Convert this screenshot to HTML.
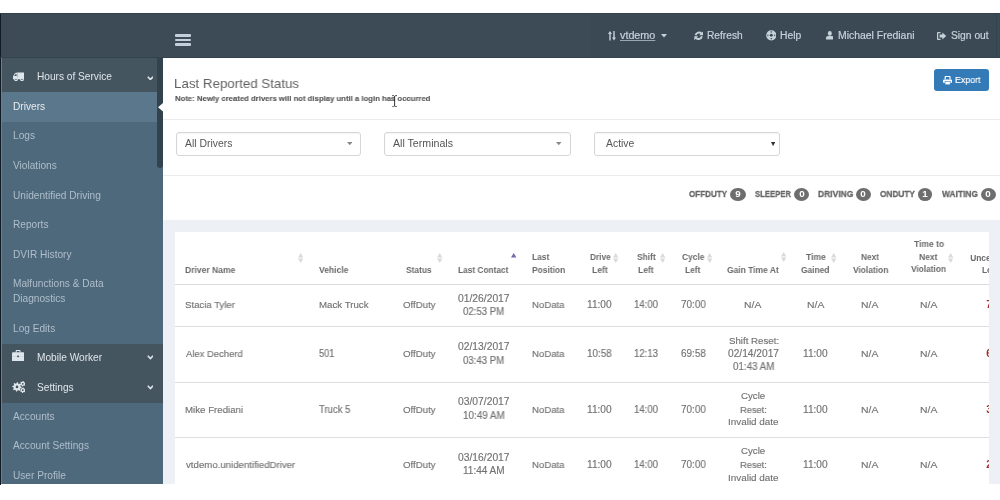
<!DOCTYPE html>
<html><head><meta charset="utf-8"><style>
html,body{margin:0;padding:0;background:#fff;width:1000px;height:500px;overflow:hidden;position:relative}
body div{position:absolute}
.t{font-family:"Liberation Sans", sans-serif;white-space:nowrap;will-change:transform}
svg{display:block}
</style></head><body>
<div style="left:0px;top:13px;width:1000px;height:45px;background:#3c4b56;"></div>
<div style="left:0px;top:13px;width:1.2px;height:471.5px;background:#101b23;"></div>
<div style="left:1.2px;top:58px;width:1px;height:426.4px;background:#6a7e8c;"></div>
<div style="left:590px;top:13px;width:410px;height:45px;background:#3a4953;"></div>
<div style="left:996px;top:13px;width:1px;height:45px;background:#35434d;"></div>
<div style="left:0px;top:13px;width:1000px;height:1px;background:#33414b;"></div>
<div style="left:0px;top:57px;width:1000px;height:1px;background:#34424c;"></div>
<div style="left:174.6px;top:34.3px;width:16.5px;height:2.6px;background:#c3d0da;border-radius:1px"></div>
<div style="left:174.6px;top:38.7px;width:16.5px;height:2.6px;background:#c3d0da;border-radius:1px"></div>
<div style="left:174.6px;top:43.0px;width:16.5px;height:2.6px;background:#c3d0da;border-radius:1px"></div>
<svg style="position:absolute;left:607.5px;top:31px" width="8" height="9.5" viewBox="0 0 8 9.5"><path d="M2 0 L0 3 L1.3 3 L1.3 9.5 L2.7 9.5 L2.7 3 L4 3 Z" fill="#c6d2da"/><path d="M6 9.5 L4 6.5 L5.3 6.5 L5.3 0 L6.7 0 L6.7 6.5 L8 6.5 Z" fill="#c6d2da"/></svg>
<div class="t" style="left:620.00px;top:30.70px;font-size:10.0px;line-height:10.0px;color:#c6d2da;font-weight:400;transform:scaleX(1.0769);transform-origin:0 0;text-decoration:underline;text-decoration-color:rgba(198,210,218,.7);-webkit-text-stroke:0.2px #c6d2da">vtdemo</div>
<svg style="position:absolute;left:661.4px;top:34px" width="6" height="3.5" viewBox="0 0 6 3.5"><path d="M0 0 L6 0 L3 3.5 Z" fill="#c6d2da"/></svg>
<svg style="position:absolute;left:693.8px;top:30.9px" width="9.5" height="9.5" viewBox="0 0 9.5 9.5"><g fill="none" stroke="#c6d2da" stroke-width="1.9"><path d="M1.6 4.2 A3.5 3.5 0 0 1 7.6 2.6"/><path d="M7.9 5.3 A3.5 3.5 0 0 1 1.9 6.9"/></g><path d="M9.2 0.3 L9.2 4.3 L5.2 4.3 Z" fill="#c6d2da"/><path d="M0.3 9.2 L0.3 5.2 L4.3 5.2 Z" fill="#c6d2da"/></svg>
<div class="t" style="left:707.29px;top:30.70px;font-size:10.0px;line-height:10.0px;color:#c6d2da;font-weight:400;transform:scaleX(1.0176);transform-origin:0 0;-webkit-text-stroke:0.2px #c6d2da">Refresh</div>
<svg style="position:absolute;left:765.8px;top:30.3px" width="10.6" height="10.6" viewBox="0 0 10.6 10.6"><circle cx="5.3" cy="5.3" r="5.1" fill="#c6d2da"/><circle cx="5.3" cy="5.3" r="1.5" fill="#3c4b56"/><g fill="#3c4b56"><ellipse cx="5.3" cy="1.9" rx="0.9" ry="0.6"/><ellipse cx="5.3" cy="8.7" rx="0.9" ry="0.6"/><ellipse cx="1.9" cy="5.3" rx="0.6" ry="0.9"/><ellipse cx="8.7" cy="5.3" rx="0.6" ry="0.9"/></g></svg>
<div class="t" style="left:779.88px;top:30.70px;font-size:10.0px;line-height:10.0px;color:#c6d2da;font-weight:400;transform:scaleX(1.0329);transform-origin:0 0;-webkit-text-stroke:0.2px #c6d2da">Help</div>
<svg style="position:absolute;left:825.8px;top:31.2px" width="7.6" height="8.6" viewBox="0 0 7.6 8.6"><ellipse cx="3.8" cy="2.4" rx="2" ry="2.3" fill="#c6d2da"/><path d="M0 8.6 L0 6.6 Q0 4.9 2.2 4.9 L5.4 4.9 Q7.6 4.9 7.6 6.6 L7.6 8.6 Z" fill="#c6d2da"/></svg>
<div class="t" style="left:837.88px;top:30.70px;font-size:10.0px;line-height:10.0px;color:#c6d2da;font-weight:400;transform:scaleX(1.0428);transform-origin:0 0;-webkit-text-stroke:0.2px #c6d2da">Michael Frediani</div>
<svg style="position:absolute;left:937px;top:32px" width="9.5" height="8" viewBox="0 0 9.5 8"><path d="M3.5 0.6 L1 0.6 Q0.6 0.6 0.6 1 L0.6 7 Q0.6 7.4 1 7.4 L3.5 7.4" fill="none" stroke="#c6d2da" stroke-width="1.2"/><path d="M2.6 2.6 L5.4 2.6 L5.4 0.4 L9.2 4 L5.4 7.6 L5.4 5.4 L2.6 5.4 Z" fill="#c6d2da"/></svg>
<div class="t" style="left:950.89px;top:30.70px;font-size:10.0px;line-height:10.0px;color:#c6d2da;font-weight:400;transform:scaleX(1.0262);transform-origin:0 0;-webkit-text-stroke:0.2px #c6d2da">Sign out</div>
<div style="left:2.2px;top:58px;width:160.8px;height:426.4px;background:#4f697c;"></div>
<div style="left:2.2px;top:58px;width:160.8px;height:33.5px;background:#45555f;"></div>
<div style="left:2.2px;top:91.5px;width:160.8px;height:30px;background:#5b778b;"></div>
<div style="left:2.2px;top:344px;width:160.8px;height:58.5px;background:#45555f;"></div>
<div style="left:157px;top:58px;width:6px;height:110.4px;background:#33434e;border-radius:0 0 3px 3px"></div>
<svg style="position:absolute;left:158px;top:103px" width="5" height="8.5" viewBox="0 0 5 8.5"><path d="M5 0 L0 4.25 L5 8.5 Z" fill="#ffffff"/></svg>
<div class="t" style="left:37.00px;top:72.17px;width:200px;font-size:10.15px;line-height:10.15px;color:#dfe6eb;font-weight:400;text-align:left;">Hours of Service</div>
<div class="t" style="left:13.00px;top:101.92px;width:200px;font-size:10.15px;line-height:10.15px;color:#e6edf1;font-weight:400;text-align:left;">Drivers</div>
<div class="t" style="left:13.00px;top:131.43px;width:200px;font-size:10.15px;line-height:10.15px;color:#aebecb;font-weight:400;text-align:left;">Logs</div>
<div class="t" style="left:13.00px;top:160.93px;width:200px;font-size:10.15px;line-height:10.15px;color:#aebecb;font-weight:400;text-align:left;">Violations</div>
<div class="t" style="left:13.00px;top:190.68px;width:200px;font-size:10.15px;line-height:10.15px;color:#aebecb;font-weight:400;text-align:left;">Unidentified Driving</div>
<div class="t" style="left:13.00px;top:220.18px;width:200px;font-size:10.15px;line-height:10.15px;color:#aebecb;font-weight:400;text-align:left;">Reports</div>
<div class="t" style="left:13.00px;top:250.18px;width:200px;font-size:10.15px;line-height:10.15px;color:#aebecb;font-weight:400;text-align:left;">DVIR History</div>
<div class="t" style="left:13.00px;top:279.43px;width:200px;font-size:10.15px;line-height:10.15px;color:#aebecb;font-weight:400;text-align:left;">Malfunctions &amp; Data</div>
<div class="t" style="left:13.00px;top:293.93px;width:200px;font-size:10.15px;line-height:10.15px;color:#aebecb;font-weight:400;text-align:left;">Diagnostics</div>
<div class="t" style="left:13.00px;top:323.93px;width:200px;font-size:10.15px;line-height:10.15px;color:#aebecb;font-weight:400;text-align:left;">Log Edits</div>
<div class="t" style="left:37.00px;top:353.18px;width:200px;font-size:10.15px;line-height:10.15px;color:#dfe6eb;font-weight:400;text-align:left;">Mobile Worker</div>
<div class="t" style="left:37.00px;top:382.68px;width:200px;font-size:10.15px;line-height:10.15px;color:#dfe6eb;font-weight:400;text-align:left;">Settings</div>
<div class="t" style="left:13.00px;top:411.93px;width:200px;font-size:10.15px;line-height:10.15px;color:#aebecb;font-weight:400;text-align:left;">Accounts</div>
<div class="t" style="left:13.00px;top:441.43px;width:200px;font-size:10.15px;line-height:10.15px;color:#aebecb;font-weight:400;text-align:left;">Account Settings</div>
<div class="t" style="left:13.00px;top:470.82px;width:200px;font-size:10.15px;line-height:10.15px;color:#aebecb;font-weight:400;text-align:left;">User Profile</div>
<svg style="position:absolute;left:146.6px;top:75.6px" width="6.8" height="4.6" viewBox="0 0 6.8 4.6"><path d="M0.8 0.8 L3.4 3.5 L6 0.8" fill="none" stroke="#dfe6eb" stroke-width="1.6"/></svg>
<svg style="position:absolute;left:146.6px;top:355.3px" width="6.8" height="4.6" viewBox="0 0 6.8 4.6"><path d="M0.8 0.8 L3.4 3.5 L6 0.8" fill="none" stroke="#dfe6eb" stroke-width="1.6"/></svg>
<svg style="position:absolute;left:146.6px;top:385.1px" width="6.8" height="4.6" viewBox="0 0 6.8 4.6"><path d="M0.8 0.8 L3.4 3.5 L6 0.8" fill="none" stroke="#dfe6eb" stroke-width="1.6"/></svg>
<svg style="position:absolute;left:12.7px;top:72px" width="11.6" height="9.2" viewBox="0 0 11.6 9.2"><path d="M4 0.5 L11.6 0.5 L11.6 7.2 L0 7.2 L0 4.2 L1.8 1.5 Q2.3 0.8 3 0.8 L4 0.8 Z" fill="#dfe6eb"/><circle cx="3" cy="7.4" r="1.8" fill="#dfe6eb"/><circle cx="9" cy="7.4" r="1.8" fill="#dfe6eb"/><circle cx="3" cy="7.4" r="0.7" fill="#45555f"/><circle cx="9" cy="7.4" r="0.7" fill="#45555f"/><path d="M1.2 3.9 L2.3 2.2 L3.6 2.2 L3.6 3.9 Z" fill="#45555f"/><rect x="4.3" y="1" width="0.5" height="4.6" fill="#8a969d"/></svg>
<svg style="position:absolute;left:12.2px;top:350.2px" width="12.2" height="11.2" viewBox="0 0 12.2 11.2"><path d="M4.2 2.6 L4.2 1.1 Q4.2 0.4 4.9 0.4 L7.3 0.4 Q8 0.4 8 1.1 L8 2.6" fill="none" stroke="#dfe6eb" stroke-width="1.1"/><rect x="0" y="2.3" width="12.2" height="8.9" rx="1" fill="#dfe6eb"/><rect x="0" y="6" width="12.2" height="0.5" fill="#c5ced4"/><rect x="5.2" y="5.6" width="1.8" height="1.6" fill="#45555f"/></svg>
<svg style="position:absolute;left:11.5px;top:380.8px" width="13.6" height="11.8" viewBox="0 0 13.6 11.8"><path d="M5.00 1.20 L5.92 1.29 L6.34 2.67 L6.94 2.99 L8.32 2.58 L8.91 3.29 L8.23 4.56 L8.43 5.22 L9.70 5.90 L9.61 6.82 L8.23 7.24 L7.91 7.84 L8.32 9.22 L7.61 9.81 L6.34 9.13 L5.68 9.33 L5.00 10.60 L4.08 10.51 L3.66 9.13 L3.06 8.81 L1.68 9.22 L1.09 8.51 L1.77 7.24 L1.57 6.58 L0.30 5.90 L0.39 4.98 L1.77 4.56 L2.09 3.96 L1.68 2.58 L2.39 1.99 L3.66 2.67 L4.32 2.47 Z" fill="#dfe6eb"/><circle cx="5" cy="5.9" r="1.3" fill="#45555f"/><path d="M10.80 0.00 L11.52 0.10 L11.85 0.98 L12.28 1.32 L13.22 1.40 L13.50 2.08 L12.90 2.80 L12.83 3.34 L13.22 4.20 L12.78 4.78 L11.85 4.62 L11.34 4.83 L10.80 5.60 L10.08 5.50 L9.75 4.62 L9.32 4.28 L8.38 4.20 L8.10 3.52 L8.70 2.80 L8.77 2.26 L8.38 1.40 L8.82 0.82 L9.75 0.98 L10.26 0.77 Z" fill="#dfe6eb"/><circle cx="10.8" cy="2.8" r="0.9" fill="#45555f"/><path d="M10.80 6.40 L11.52 6.50 L11.85 7.38 L12.28 7.72 L13.22 7.80 L13.50 8.48 L12.90 9.20 L12.83 9.74 L13.22 10.60 L12.78 11.18 L11.85 11.02 L11.34 11.23 L10.80 12.00 L10.08 11.90 L9.75 11.02 L9.32 10.68 L8.38 10.60 L8.10 9.92 L8.70 9.20 L8.77 8.66 L8.38 7.80 L8.82 7.22 L9.75 7.38 L10.26 7.17 Z" fill="#dfe6eb"/><circle cx="10.8" cy="9.2" r="0.9" fill="#45555f"/></svg>
<div class="t" style="left:174.41px;top:76.60px;font-size:13.4px;line-height:13.4px;color:#626262;font-weight:400;transform:scaleX(0.9944);transform-origin:0 0;">Last Reported Status</div>
<div class="t" style="left:175.16px;top:95.20px;font-size:8.0px;line-height:8.0px;color:#555;font-weight:700;transform:scaleX(0.9659);transform-origin:0 0;-webkit-text-stroke:0.12px #555">Note: Newly created drivers will not display until a login has occurred</div>
<div style="left:933.5px;top:69.3px;width:55.3px;height:21.7px;background:#337ab7;border-radius:3px"></div>
<svg style="position:absolute;left:942.8px;top:76px" width="9.2" height="9" viewBox="0 0 9.2 9"><path d="M2.2 3.2 L2.2 1.2 Q2.2 0.4 3 0.4 L6.2 0.4 Q7 0.4 7 1.2 L7 3.2" fill="none" stroke="#fff" stroke-width="1.2"/><rect x="0" y="3.4" width="9.2" height="3.6" rx="1.2" fill="#fff"/><rect x="2" y="5.6" width="5.2" height="3.2" fill="#fff" stroke="#337ab7" stroke-width="0.6"/></svg>
<div class="t" style="left:955.01px;top:76.00px;font-size:9.0px;line-height:9.0px;color:#ffffff;font-weight:400;transform:scaleX(0.9804);transform-origin:0 0;-webkit-text-stroke:0.2px #fff">Export</div>
<div style="left:163px;top:119px;width:837px;height:1px;background:#ececec;"></div>
<div style="left:163px;top:175px;width:837px;height:1px;background:#ececec;"></div>
<div style="left:175.5px;top:131.5px;width:185.2px;height:24.5px;background:#fff;box-sizing:border-box;border:1px solid #d6d6d6;border-radius:3px;box-shadow:inset 0 1px 1px rgba(0,0,0,.04)"></div>
<div style="left:384px;top:131.5px;width:186.5px;height:24.5px;background:#fff;box-sizing:border-box;border:1px solid #d6d6d6;border-radius:3px;box-shadow:inset 0 1px 1px rgba(0,0,0,.04)"></div>
<div style="left:594px;top:131.5px;width:185.70000000000005px;height:24.5px;background:#fff;box-sizing:border-box;border:1px solid #d6d6d6;border-radius:3px;box-shadow:inset 0 1px 1px rgba(0,0,0,.04)"></div>
<div class="t" style="left:184.50px;top:138.90px;font-size:10.4px;line-height:10.4px;color:#555;font-weight:400;transform:scaleX(1.0000);transform-origin:0 0;">All Drivers</div>
<div class="t" style="left:393.00px;top:138.90px;font-size:10.4px;line-height:10.4px;color:#555;font-weight:400;transform:scaleX(1.0222);transform-origin:0 0;">All Terminals</div>
<div class="t" style="left:605.80px;top:139.00px;font-size:10.4px;line-height:10.4px;color:#555;font-weight:400;transform:scaleX(0.9964);transform-origin:0 0;">Active</div>
<svg style="position:absolute;left:346.8px;top:142.2px" width="5.6" height="3.2" viewBox="0 0 5.6 3.2"><path d="M0 0 L5.6 0 L2.8 3.2 Z" fill="#888"/></svg>
<svg style="position:absolute;left:556.4px;top:142.2px" width="5.6" height="3.2" viewBox="0 0 5.6 3.2"><path d="M0 0 L5.6 0 L2.8 3.2 Z" fill="#888"/></svg>
<svg style="position:absolute;left:770.5px;top:141.5px" width="4.2" height="4.2" viewBox="0 0 4.2 4.2"><path d="M0 0 L4.2 0 L2.1 4.2 Z" fill="#333"/></svg>
<div class="t" style="left:689.38px;top:189.70px;font-size:9.0px;line-height:9.0px;color:#666;font-weight:700;transform:scaleX(0.8952);transform-origin:0 0;-webkit-text-stroke:0.3px #666">OFFDUTY</div>
<div style="left:730.4px;top:187.6px;width:15.200000000000045px;height:13.2px;background:#6e6e6e;border-radius:50%"></div>
<div class="t" style="left:728.00px;top:189.30px;width:20px;font-size:9.8px;line-height:9.8px;color:#fff;font-weight:700;text-align:center;">9</div>
<div class="t" style="left:754.99px;top:189.70px;font-size:9.0px;line-height:9.0px;color:#666;font-weight:700;transform:scaleX(0.8554);transform-origin:0 0;-webkit-text-stroke:0.3px #666">SLEEPER</div>
<div style="left:793.9px;top:187.6px;width:15.399999999999977px;height:13.2px;background:#6e6e6e;border-radius:50%"></div>
<div class="t" style="left:791.60px;top:189.30px;width:20px;font-size:9.8px;line-height:9.8px;color:#fff;font-weight:700;text-align:center;">0</div>
<div class="t" style="left:817.93px;top:189.70px;font-size:9.0px;line-height:9.0px;color:#666;font-weight:700;transform:scaleX(0.9425);transform-origin:0 0;-webkit-text-stroke:0.3px #666">DRIVING</div>
<div style="left:856px;top:187.6px;width:14.899999999999977px;height:13.2px;background:#6e6e6e;border-radius:50%"></div>
<div class="t" style="left:853.45px;top:189.30px;width:20px;font-size:9.8px;line-height:9.8px;color:#fff;font-weight:700;text-align:center;">0</div>
<div class="t" style="left:879.77px;top:189.70px;font-size:9.0px;line-height:9.0px;color:#666;font-weight:700;transform:scaleX(0.9173);transform-origin:0 0;-webkit-text-stroke:0.3px #666">ONDUTY</div>
<div style="left:917.9px;top:187.6px;width:14.600000000000023px;height:13.2px;background:#6e6e6e;border-radius:50%"></div>
<div class="t" style="left:915.20px;top:189.30px;width:20px;font-size:9.8px;line-height:9.8px;color:#fff;font-weight:700;text-align:center;">1</div>
<div class="t" style="left:942.40px;top:189.70px;font-size:9.0px;line-height:9.0px;color:#666;font-weight:700;transform:scaleX(0.9342);transform-origin:0 0;-webkit-text-stroke:0.3px #666">WAITING</div>
<div style="left:980.8px;top:187.6px;width:15.200000000000045px;height:13.2px;background:#6e6e6e;border-radius:50%"></div>
<div class="t" style="left:978.40px;top:189.30px;width:20px;font-size:9.8px;line-height:9.8px;color:#fff;font-weight:700;text-align:center;">0</div>
<div style="left:163px;top:220px;width:837px;height:264.4px;background:#edf0f5;"></div>
<div style="left:175px;top:232px;width:814px;height:252.4px;background:#ffffff;"></div>
<div style="left:175px;top:283.6px;width:814px;height:1.4px;background:#dcdcdc;"></div>
<div style="left:175px;top:326px;width:814px;height:1px;background:#dedede;"></div>
<div style="left:175px;top:381.8px;width:814px;height:1px;background:#dedede;"></div>
<div style="left:175px;top:437px;width:814px;height:1px;background:#dedede;"></div>
<div class="t" style="left:185.33px;top:265.70px;font-size:9.0px;line-height:9.0px;color:#6a6a6a;font-weight:700;transform:scaleX(0.9493);transform-origin:0 0;">Driver Name</div>
<svg style="position:absolute;left:297.7px;top:252.8px" width="5.4" height="10" viewBox="0 0 5.4 10"><path d="M2.7 0 L5.4 4.6 L0 4.6 Z" fill="#dadada"/><path d="M2.7 10 L5.4 5.4 L0 5.4 Z" fill="#dadada"/></svg>
<div class="t" style="left:318.90px;top:265.70px;font-size:9.0px;line-height:9.0px;color:#6a6a6a;font-weight:700;transform:scaleX(0.9463);transform-origin:0 0;">Vehicle</div>
<div class="t" style="left:406.17px;top:265.70px;font-size:9.0px;line-height:9.0px;color:#6a6a6a;font-weight:700;transform:scaleX(0.9296);transform-origin:0 0;">Status</div>
<svg style="position:absolute;left:437.2px;top:253px" width="5.4" height="10" viewBox="0 0 5.4 10"><path d="M2.7 0 L5.4 4.6 L0 4.6 Z" fill="#dadada"/><path d="M2.7 10 L5.4 5.4 L0 5.4 Z" fill="#dadada"/></svg>
<div class="t" style="left:458.44px;top:265.70px;font-size:9.0px;line-height:9.0px;color:#6a6a6a;font-weight:700;transform:scaleX(0.9241);transform-origin:0 0;">Last Contact</div>
<svg style="position:absolute;left:511.2px;top:253px" width="5.4" height="4.6" viewBox="0 0 5.4 4.6"><path d="M2.7 0 L5.4 4.6 L0 4.6 Z" fill="#6d6dab"/></svg>
<div class="t" style="left:531.53px;top:253.30px;font-size:9.0px;line-height:9.0px;color:#6a6a6a;font-weight:700;transform:scaleX(0.9333);transform-origin:0 0;">Last</div>
<div class="t" style="left:531.53px;top:265.70px;font-size:9.0px;line-height:9.0px;color:#6a6a6a;font-weight:700;transform:scaleX(0.9353);transform-origin:0 0;">Position</div>
<div class="t" style="left:589.54px;top:253.30px;font-size:9.0px;line-height:9.0px;color:#6a6a6a;font-weight:700;transform:scaleX(0.9195);transform-origin:0 0;">Drive</div>
<div class="t" style="left:591.52px;top:265.70px;font-size:9.0px;line-height:9.0px;color:#6a6a6a;font-weight:700;transform:scaleX(0.9562);transform-origin:0 0;">Left</div>
<svg style="position:absolute;left:613.3px;top:252.8px" width="5.4" height="10" viewBox="0 0 5.4 10"><path d="M2.7 0 L5.4 4.6 L0 4.6 Z" fill="#dadada"/><path d="M2.7 10 L5.4 5.4 L0 5.4 Z" fill="#dadada"/></svg>
<div class="t" style="left:636.97px;top:253.30px;font-size:9.0px;line-height:9.0px;color:#6a6a6a;font-weight:700;transform:scaleX(0.9316);transform-origin:0 0;">Shift</div>
<div class="t" style="left:638.32px;top:265.70px;font-size:9.0px;line-height:9.0px;color:#6a6a6a;font-weight:700;transform:scaleX(0.9500);transform-origin:0 0;">Left</div>
<svg style="position:absolute;left:659.9px;top:252.8px" width="5.4" height="10" viewBox="0 0 5.4 10"><path d="M2.7 0 L5.4 4.6 L0 4.6 Z" fill="#dadada"/><path d="M2.7 10 L5.4 5.4 L0 5.4 Z" fill="#dadada"/></svg>
<div class="t" style="left:681.77px;top:253.30px;font-size:9.0px;line-height:9.0px;color:#6a6a6a;font-weight:700;transform:scaleX(0.9319);transform-origin:0 0;">Cycle</div>
<div class="t" style="left:685.03px;top:265.70px;font-size:9.0px;line-height:9.0px;color:#6a6a6a;font-weight:700;transform:scaleX(0.9312);transform-origin:0 0;">Left</div>
<svg style="position:absolute;left:706.5px;top:252.8px" width="5.4" height="10" viewBox="0 0 5.4 10"><path d="M2.7 0 L5.4 4.6 L0 4.6 Z" fill="#dadada"/><path d="M2.7 10 L5.4 5.4 L0 5.4 Z" fill="#dadada"/></svg>
<div class="t" style="left:727.46px;top:265.70px;font-size:9.0px;line-height:9.0px;color:#6a6a6a;font-weight:700;transform:scaleX(0.9406);transform-origin:0 0;">Gain Time At</div>
<svg style="position:absolute;left:780.7px;top:252.4px" width="5.4" height="10" viewBox="0 0 5.4 10"><path d="M2.7 0 L5.4 4.6 L0 4.6 Z" fill="#dadada"/><path d="M2.7 10 L5.4 5.4 L0 5.4 Z" fill="#dadada"/></svg>
<div class="t" style="left:806.00px;top:253.30px;font-size:9.0px;line-height:9.0px;color:#6a6a6a;font-weight:700;transform:scaleX(0.9561);transform-origin:0 0;">Time</div>
<div class="t" style="left:801.37px;top:265.70px;font-size:9.0px;line-height:9.0px;color:#6a6a6a;font-weight:700;transform:scaleX(0.9311);transform-origin:0 0;">Gained</div>
<svg style="position:absolute;left:831.2px;top:252.8px" width="5.4" height="10" viewBox="0 0 5.4 10"><path d="M2.7 0 L5.4 4.6 L0 4.6 Z" fill="#dadada"/><path d="M2.7 10 L5.4 5.4 L0 5.4 Z" fill="#dadada"/></svg>
<div class="t" style="left:860.94px;top:253.30px;font-size:9.0px;line-height:9.0px;color:#6a6a6a;font-weight:700;transform:scaleX(0.9211);transform-origin:0 0;">Next</div>
<div class="t" style="left:852.50px;top:265.70px;font-size:9.0px;line-height:9.0px;color:#6a6a6a;font-weight:700;transform:scaleX(0.9360);transform-origin:0 0;">Violation</div>
<div class="t" style="left:913.90px;top:240.40px;font-size:9.0px;line-height:9.0px;color:#6a6a6a;font-weight:700;transform:scaleX(0.9492);transform-origin:0 0;">Time to</div>
<div class="t" style="left:919.03px;top:253.00px;font-size:9.0px;line-height:9.0px;color:#6a6a6a;font-weight:700;transform:scaleX(0.9474);transform-origin:0 0;">Next</div>
<div class="t" style="left:911.10px;top:265.40px;font-size:9.0px;line-height:9.0px;color:#6a6a6a;font-weight:700;transform:scaleX(0.9280);transform-origin:0 0;">Violation</div>
<svg style="position:absolute;left:948.1px;top:252.6px" width="5.4" height="10" viewBox="0 0 5.4 10"><path d="M2.7 0 L5.4 4.6 L0 4.6 Z" fill="#dadada"/><path d="M2.7 10 L5.4 5.4 L0 5.4 Z" fill="#dadada"/></svg>
<div style="left:963px;top:232px;width:26px;height:252.4px;overflow:hidden">
<div class="t" style="left:-11.50px;top:21.60px;width:80px;font-size:8.4px;line-height:8.4px;color:#6a6a6a;font-weight:700;text-align:center">Uncertified</div>
<div class="t" style="left:-11.50px;top:34.00px;width:80px;font-size:8.4px;line-height:8.4px;color:#6a6a6a;font-weight:700;text-align:center">Logs</div>
<div class="t" style="left:-14.40px;top:68.10px;width:80px;font-size:10px;line-height:10px;color:#9c2f2b;font-weight:700;text-align:center">7</div>
<div class="t" style="left:-14.40px;top:116.90px;width:80px;font-size:10px;line-height:10px;color:#9c2f2b;font-weight:700;text-align:center">6</div>
<div class="t" style="left:-14.40px;top:172.90px;width:80px;font-size:10px;line-height:10px;color:#9c2f2b;font-weight:700;text-align:center">3</div>
<div class="t" style="left:-14.40px;top:227.50px;width:80px;font-size:10px;line-height:10px;color:#9c2f2b;font-weight:700;text-align:center">2</div>
</div>
<div class="t" style="left:185.31px;top:300.25px;font-size:9.7px;line-height:9.7px;color:#727272;font-weight:400;transform:scaleX(0.9889);transform-origin:0 0;-webkit-text-stroke:0.15px #727272">Stacia Tyler</div>
<div class="t" style="left:318.50px;top:300.25px;font-size:9.7px;line-height:9.7px;color:#727272;font-weight:400;transform:scaleX(1.0000);transform-origin:0 0;-webkit-text-stroke:0.15px #727272">Mack Truck</div>
<div class="t" style="left:402.75px;top:300.25px;font-size:9.7px;line-height:9.7px;color:#727272;font-weight:400;transform:scaleX(0.9922);transform-origin:0 0;-webkit-text-stroke:0.15px #727272">OffDuty</div>
<div class="t" style="left:457.84px;top:293.90px;font-size:10.0px;line-height:10.0px;color:#727272;font-weight:400;transform:scaleX(1.0303);transform-origin:0 0;-webkit-text-stroke:0.15px #727272">01/26/2017</div>
<div class="t" style="left:463.16px;top:306.90px;font-size:10.0px;line-height:10.0px;color:#727272;font-weight:400;transform:scaleX(0.9619);transform-origin:0 0;-webkit-text-stroke:0.15px #727272">02:53 PM</div>
<div class="t" style="left:531.51px;top:300.25px;font-size:9.7px;line-height:9.7px;color:#727272;font-weight:400;transform:scaleX(0.9846);transform-origin:0 0;-webkit-text-stroke:0.15px #727272">NoData</div>
<div class="t" style="left:587.24px;top:300.10px;font-size:10.0px;line-height:10.0px;color:#727272;font-weight:400;transform:scaleX(1.0151);transform-origin:0 0;-webkit-text-stroke:0.15px #727272">11:00</div>
<div class="t" style="left:634.28px;top:300.10px;font-size:10.0px;line-height:10.0px;color:#727272;font-weight:400;transform:scaleX(0.9583);transform-origin:0 0;-webkit-text-stroke:0.15px #727272">14:00</div>
<div class="t" style="left:680.51px;top:300.10px;font-size:10.0px;line-height:10.0px;color:#727272;font-weight:400;transform:scaleX(0.9897);transform-origin:0 0;-webkit-text-stroke:0.15px #727272">70:00</div>
<div class="t" style="left:744.46px;top:300.25px;font-size:9.7px;line-height:9.7px;color:#727272;font-weight:400;transform:scaleX(1.0710);transform-origin:0 0;-webkit-text-stroke:0.15px #727272">N/A</div>
<div class="t" style="left:806.86px;top:300.25px;font-size:9.7px;line-height:9.7px;color:#727272;font-weight:400;transform:scaleX(1.0710);transform-origin:0 0;-webkit-text-stroke:0.15px #727272">N/A</div>
<div class="t" style="left:860.96px;top:300.25px;font-size:9.7px;line-height:9.7px;color:#727272;font-weight:400;transform:scaleX(1.0710);transform-origin:0 0;-webkit-text-stroke:0.15px #727272">N/A</div>
<div class="t" style="left:919.66px;top:300.25px;font-size:9.7px;line-height:9.7px;color:#727272;font-weight:400;transform:scaleX(1.0710);transform-origin:0 0;-webkit-text-stroke:0.15px #727272">N/A</div>
<div class="t" style="left:185.80px;top:349.05px;font-size:9.7px;line-height:9.7px;color:#727272;font-weight:400;transform:scaleX(0.9749);transform-origin:0 0;-webkit-text-stroke:0.15px #727272">Alex Decherd</div>
<div class="t" style="left:318.54px;top:348.90px;font-size:10.0px;line-height:10.0px;color:#727272;font-weight:400;transform:scaleX(0.9270);transform-origin:0 0;-webkit-text-stroke:0.15px #727272">501</div>
<div class="t" style="left:402.75px;top:349.05px;font-size:9.7px;line-height:9.7px;color:#727272;font-weight:400;transform:scaleX(0.9922);transform-origin:0 0;-webkit-text-stroke:0.15px #727272">OffDuty</div>
<div class="t" style="left:457.84px;top:342.10px;font-size:10.0px;line-height:10.0px;color:#727272;font-weight:400;transform:scaleX(1.0303);transform-origin:0 0;-webkit-text-stroke:0.15px #727272">02/13/2017</div>
<div class="t" style="left:463.16px;top:355.50px;font-size:10.0px;line-height:10.0px;color:#727272;font-weight:400;transform:scaleX(0.9619);transform-origin:0 0;-webkit-text-stroke:0.15px #727272">03:43 PM</div>
<div class="t" style="left:531.51px;top:349.05px;font-size:9.7px;line-height:9.7px;color:#727272;font-weight:400;transform:scaleX(0.9846);transform-origin:0 0;-webkit-text-stroke:0.15px #727272">NoData</div>
<div class="t" style="left:587.26px;top:348.90px;font-size:10.0px;line-height:10.0px;color:#727272;font-weight:400;transform:scaleX(0.9833);transform-origin:0 0;-webkit-text-stroke:0.15px #727272">10:58</div>
<div class="t" style="left:634.28px;top:348.90px;font-size:10.0px;line-height:10.0px;color:#727272;font-weight:400;transform:scaleX(0.9583);transform-origin:0 0;-webkit-text-stroke:0.15px #727272">12:13</div>
<div class="t" style="left:680.51px;top:348.90px;font-size:10.0px;line-height:10.0px;color:#727272;font-weight:400;transform:scaleX(0.9897);transform-origin:0 0;-webkit-text-stroke:0.15px #727272">69:58</div>
<div class="t" style="left:728.50px;top:336.25px;font-size:9.7px;line-height:9.7px;color:#727272;font-weight:400;transform:scaleX(0.9969);transform-origin:0 0;-webkit-text-stroke:0.15px #727272">Shift Reset:</div>
<div class="t" style="left:727.85px;top:348.90px;font-size:10.0px;line-height:10.0px;color:#727272;font-weight:400;transform:scaleX(1.0182);transform-origin:0 0;-webkit-text-stroke:0.15px #727272">02/14/2017</div>
<div class="t" style="left:732.76px;top:362.10px;font-size:10.0px;line-height:10.0px;color:#727272;font-weight:400;transform:scaleX(0.9783);transform-origin:0 0;-webkit-text-stroke:0.15px #727272">01:43 AM</div>
<div class="t" style="left:803.14px;top:348.90px;font-size:10.0px;line-height:10.0px;color:#727272;font-weight:400;transform:scaleX(1.0151);transform-origin:0 0;-webkit-text-stroke:0.15px #727272">11:00</div>
<div class="t" style="left:860.96px;top:349.05px;font-size:9.7px;line-height:9.7px;color:#727272;font-weight:400;transform:scaleX(1.0710);transform-origin:0 0;-webkit-text-stroke:0.15px #727272">N/A</div>
<div class="t" style="left:919.66px;top:349.05px;font-size:9.7px;line-height:9.7px;color:#727272;font-weight:400;transform:scaleX(1.0710);transform-origin:0 0;-webkit-text-stroke:0.15px #727272">N/A</div>
<div class="t" style="left:185.30px;top:404.85px;font-size:9.7px;line-height:9.7px;color:#727272;font-weight:400;transform:scaleX(0.9974);transform-origin:0 0;-webkit-text-stroke:0.15px #727272">Mike Frediani</div>
<div class="t" style="left:318.76px;top:404.70px;font-size:10.0px;line-height:10.0px;color:#727272;font-weight:400;transform:scaleX(0.9477);transform-origin:0 0;-webkit-text-stroke:0.15px #727272">Truck 5</div>
<div class="t" style="left:402.75px;top:404.85px;font-size:9.7px;line-height:9.7px;color:#727272;font-weight:400;transform:scaleX(0.9922);transform-origin:0 0;-webkit-text-stroke:0.15px #727272">OffDuty</div>
<div class="t" style="left:457.84px;top:397.10px;font-size:10.0px;line-height:10.0px;color:#727272;font-weight:400;transform:scaleX(1.0303);transform-origin:0 0;-webkit-text-stroke:0.15px #727272">03/07/2017</div>
<div class="t" style="left:462.66px;top:410.50px;font-size:10.0px;line-height:10.0px;color:#727272;font-weight:400;transform:scaleX(0.9854);transform-origin:0 0;-webkit-text-stroke:0.15px #727272">10:49 AM</div>
<div class="t" style="left:531.51px;top:404.85px;font-size:9.7px;line-height:9.7px;color:#727272;font-weight:400;transform:scaleX(0.9846);transform-origin:0 0;-webkit-text-stroke:0.15px #727272">NoData</div>
<div class="t" style="left:587.24px;top:404.70px;font-size:10.0px;line-height:10.0px;color:#727272;font-weight:400;transform:scaleX(1.0151);transform-origin:0 0;-webkit-text-stroke:0.15px #727272">11:00</div>
<div class="t" style="left:634.28px;top:404.70px;font-size:10.0px;line-height:10.0px;color:#727272;font-weight:400;transform:scaleX(0.9583);transform-origin:0 0;-webkit-text-stroke:0.15px #727272">14:00</div>
<div class="t" style="left:680.51px;top:404.70px;font-size:10.0px;line-height:10.0px;color:#727272;font-weight:400;transform:scaleX(0.9897);transform-origin:0 0;-webkit-text-stroke:0.15px #727272">70:00</div>
<div class="t" style="left:741.05px;top:391.05px;font-size:9.7px;line-height:9.7px;color:#727272;font-weight:400;transform:scaleX(1.0000);transform-origin:0 0;-webkit-text-stroke:0.15px #727272">Cycle</div>
<div class="t" style="left:739.97px;top:404.65px;font-size:9.7px;line-height:9.7px;color:#727272;font-weight:400;transform:scaleX(0.9607);transform-origin:0 0;-webkit-text-stroke:0.15px #727272">Reset:</div>
<div class="t" style="left:727.78px;top:417.45px;font-size:9.7px;line-height:9.7px;color:#727272;font-weight:400;transform:scaleX(1.0206);transform-origin:0 0;-webkit-text-stroke:0.15px #727272">Invalid date</div>
<div class="t" style="left:803.14px;top:404.70px;font-size:10.0px;line-height:10.0px;color:#727272;font-weight:400;transform:scaleX(1.0151);transform-origin:0 0;-webkit-text-stroke:0.15px #727272">11:00</div>
<div class="t" style="left:860.96px;top:404.85px;font-size:9.7px;line-height:9.7px;color:#727272;font-weight:400;transform:scaleX(1.0710);transform-origin:0 0;-webkit-text-stroke:0.15px #727272">N/A</div>
<div class="t" style="left:919.66px;top:404.85px;font-size:9.7px;line-height:9.7px;color:#727272;font-weight:400;transform:scaleX(1.0710);transform-origin:0 0;-webkit-text-stroke:0.15px #727272">N/A</div>
<div class="t" style="left:185.80px;top:459.65px;font-size:9.7px;line-height:9.7px;color:#727272;font-weight:400;transform:scaleX(0.9941);transform-origin:0 0;-webkit-text-stroke:0.15px #727272">vtdemo.unidentifiedDriver</div>
<div class="t" style="left:402.75px;top:459.65px;font-size:9.7px;line-height:9.7px;color:#727272;font-weight:400;transform:scaleX(0.9922);transform-origin:0 0;-webkit-text-stroke:0.15px #727272">OffDuty</div>
<div class="t" style="left:457.84px;top:453.10px;font-size:10.0px;line-height:10.0px;color:#727272;font-weight:400;transform:scaleX(1.0303);transform-origin:0 0;-webkit-text-stroke:0.15px #727272">03/16/2017</div>
<div class="t" style="left:462.65px;top:466.10px;font-size:10.0px;line-height:10.0px;color:#727272;font-weight:400;transform:scaleX(1.0037);transform-origin:0 0;-webkit-text-stroke:0.15px #727272">11:44 AM</div>
<div class="t" style="left:531.51px;top:459.65px;font-size:9.7px;line-height:9.7px;color:#727272;font-weight:400;transform:scaleX(0.9846);transform-origin:0 0;-webkit-text-stroke:0.15px #727272">NoData</div>
<div class="t" style="left:587.24px;top:459.50px;font-size:10.0px;line-height:10.0px;color:#727272;font-weight:400;transform:scaleX(1.0151);transform-origin:0 0;-webkit-text-stroke:0.15px #727272">11:00</div>
<div class="t" style="left:634.28px;top:459.50px;font-size:10.0px;line-height:10.0px;color:#727272;font-weight:400;transform:scaleX(0.9583);transform-origin:0 0;-webkit-text-stroke:0.15px #727272">14:00</div>
<div class="t" style="left:680.51px;top:459.50px;font-size:10.0px;line-height:10.0px;color:#727272;font-weight:400;transform:scaleX(0.9897);transform-origin:0 0;-webkit-text-stroke:0.15px #727272">70:00</div>
<div class="t" style="left:741.05px;top:446.45px;font-size:9.7px;line-height:9.7px;color:#727272;font-weight:400;transform:scaleX(1.0000);transform-origin:0 0;-webkit-text-stroke:0.15px #727272">Cycle</div>
<div class="t" style="left:739.97px;top:459.65px;font-size:9.7px;line-height:9.7px;color:#727272;font-weight:400;transform:scaleX(0.9607);transform-origin:0 0;-webkit-text-stroke:0.15px #727272">Reset:</div>
<div class="t" style="left:727.78px;top:472.85px;font-size:9.7px;line-height:9.7px;color:#727272;font-weight:400;transform:scaleX(1.0206);transform-origin:0 0;-webkit-text-stroke:0.15px #727272">Invalid date</div>
<div class="t" style="left:803.14px;top:459.50px;font-size:10.0px;line-height:10.0px;color:#727272;font-weight:400;transform:scaleX(1.0151);transform-origin:0 0;-webkit-text-stroke:0.15px #727272">11:00</div>
<div class="t" style="left:860.96px;top:459.65px;font-size:9.7px;line-height:9.7px;color:#727272;font-weight:400;transform:scaleX(1.0710);transform-origin:0 0;-webkit-text-stroke:0.15px #727272">N/A</div>
<div class="t" style="left:919.66px;top:459.65px;font-size:9.7px;line-height:9.7px;color:#727272;font-weight:400;transform:scaleX(1.0710);transform-origin:0 0;-webkit-text-stroke:0.15px #727272">N/A</div>
<svg style="position:absolute;left:391.9px;top:94.6px" width="5.2" height="12.4" viewBox="0 0 5.2 12.4"><path d="M0.2 0.6 Q2 0.4 2.6 1.4 Q3.2 0.4 5 0.6 M2.6 1.4 L2.6 11 M0.2 11.8 Q2 12 2.6 11 Q3.2 12 5 11.8" fill="none" stroke="#222" stroke-width="0.9"/></svg>
</body></html>
